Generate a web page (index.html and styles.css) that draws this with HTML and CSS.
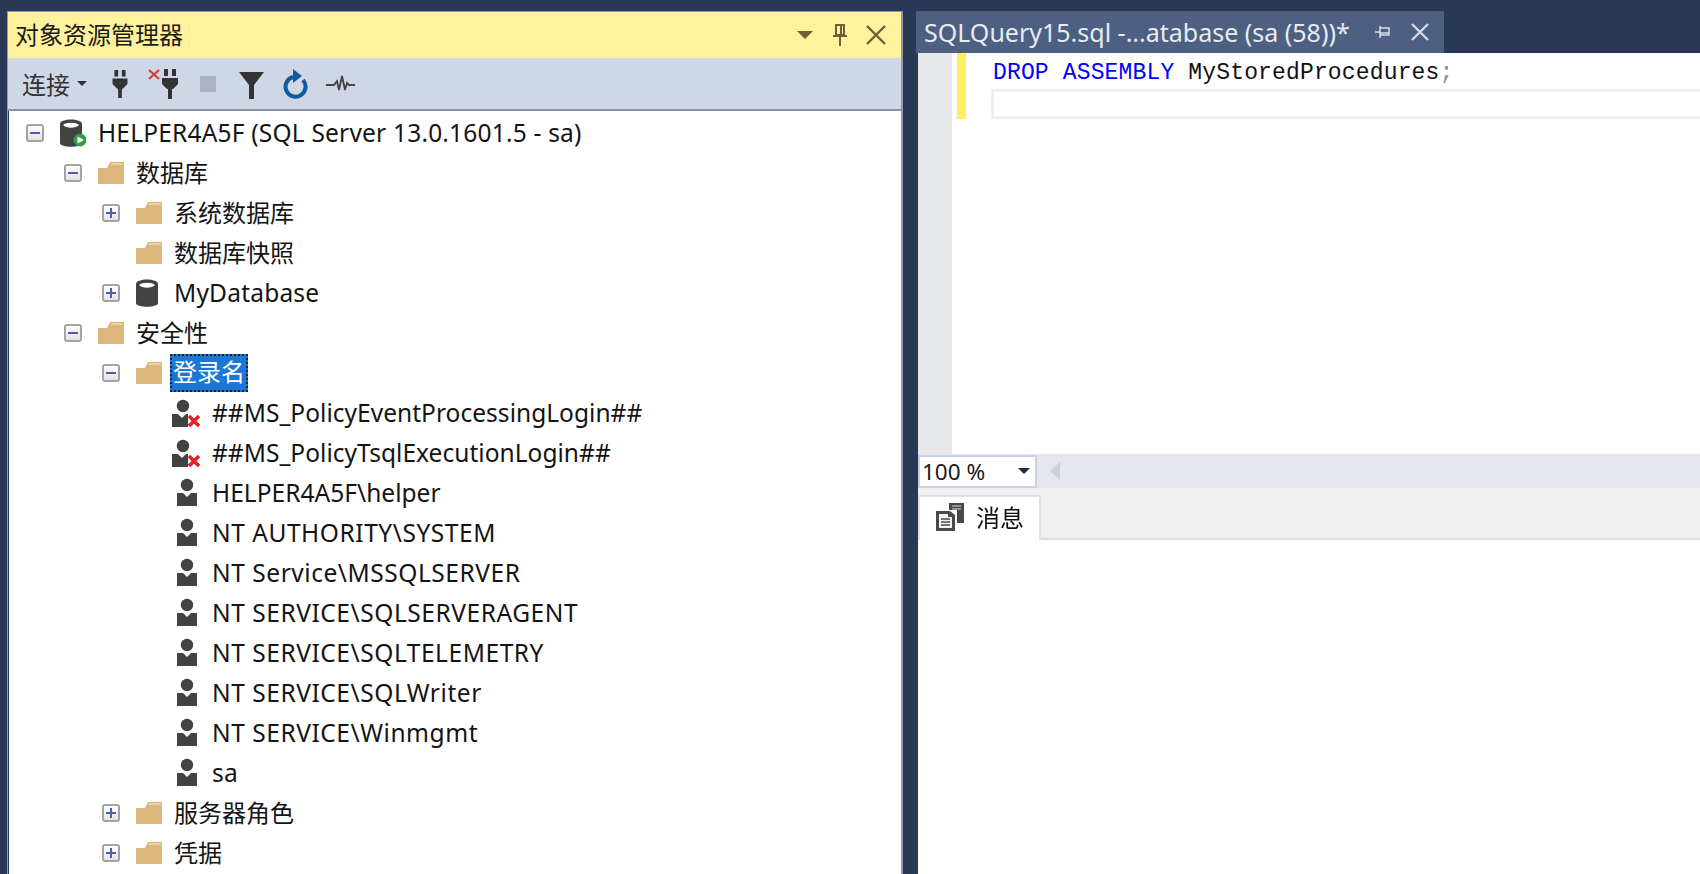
FILE: index.html
```html
<!DOCTYPE html>
<html lang="zh-CN">
<head>
<meta charset="utf-8">
<title>SSMS</title>
<link rel="stylesheet" href="styles.css">
</head>
<body>
<svg class="defs" width="0" height="0">
  <symbol id="folder" viewBox="0 0 26 22"><path d="M0 6 L9 6 L12 0 L26 0 L26 22 L0 22 Z" fill="#dcb67a"/><path d="M12.5 2 H24.5" stroke="#f0d8ae" stroke-width="1.5"/></symbol>
  <symbol id="user" viewBox="0 0 26 28"><circle cx="12" cy="7" r="6.2" fill="#424242"/><path d="M2 15 H8 L12 19 L16 15 H22 V28 H2 Z" fill="#424242"/></symbol>
  <symbol id="userx" viewBox="0 0 30 28"><circle cx="12" cy="7" r="6.2" fill="#424242"/><path d="M1 15 H7 L11 19 L15 15 H17 V28 H1 Z" fill="#424242"/><path d="M18 17 L28 27 M28 17 L18 27" stroke="#e8202a" stroke-width="3.6"/></symbol>
  <symbol id="plug" viewBox="0 0 16 30"><path d="M2 0 H6 V7 H2 Z M10 0 H14 V7 H10 Z" fill="#333"/><path d="M0 9 H16 V15 L11 20 H10 V30 H6 V20 H5 L0 15 Z" fill="#333"/></symbol>
  <symbol id="drive" viewBox="0 0 26 28"><path d="M0 5 C0 -1 22 -1 22 5 V24 C22 29 0 29 0 24 Z" fill="#424242"/><path d="M3 6 C6 3 16 3 19 6 C16 9.500 6 9.500 3 6 Z" fill="#fff"/></symbol>
</svg>
<div class="app">
  <section class="explorer">
    <header class="title">
      <span class="title-text">对象资源管理器</span>
      <svg class="t-caret" width="16" height="8" viewBox="0 0 16 8"><path d="M0 0 H16 L8 8 Z" fill="#6f5f38"/></svg>
      <svg class="t-pin" width="14" height="22" viewBox="0 0 14 22"><path d="M3 1 H11 V11 H3 Z M8 1 V11 M0 12 H14 M7 12 V22" fill="none" stroke="#6f5f38" stroke-width="2"/></svg>
      <svg class="t-close" width="20" height="20" viewBox="0 0 20 20"><path d="M1 1 L19 19 M19 1 L1 19" stroke="#6f5f38" stroke-width="2.400"/></svg>
    </header>
    <div class="toolbar">
      <span class="connect">连接</span>
      <svg class="caret" width="10" height="5" viewBox="0 0 10 5"><path d="M0 0 H10 L5 5 Z" fill="#333"/></svg>
      <svg class="tb plug1" width="16" height="28"><use href="#plug"/></svg>
      <svg class="tb plug2" width="30" height="30" viewBox="0 0 30 30"><path d="M1 1 L11 10 M11 1 L1 10" stroke="#d04030" stroke-width="2.200"/><use href="#plug" x="14" width="16" height="30"/></svg>
      <span class="tb stop"></span>
      <svg class="tb funnel" width="25" height="27" viewBox="0 0 25 27"><path d="M0 0 H25 L15 13 V27 H10 V13 Z" fill="#333"/></svg>
      <svg class="tb refresh" width="26" height="30" viewBox="0 0 26 30"><path d="M21 11 A10 10 0 1 1 11 8" fill="none" stroke="#0e5c9e" stroke-width="4"/><path d="M11 0 L20 7 L11 14 Z" fill="#0e5c9e"/></svg>
      <svg class="tb pulse" width="29" height="18" viewBox="0 0 29 18"><path d="M0 10 H8 L11 6 L13 15 L16 1 L19 15 L21 8 L23 10 H29" fill="none" stroke="#444" stroke-width="1.800"/></svg>
    </div>
    <div class="tree">
      <div class="row l0"><span class="exp minus"></span><svg class="ico" viewBox="0 0 26 28"><use href="#drive"/><circle cx="20" cy="21" r="6.500" fill="#2f9e44"/><path d="M17.500 17.500 L24 21 L17.500 24.500 Z" fill="#fff"/></svg><span class="label">HELPER4A5F (SQL Server 13.0.1601.5 - sa)</span></div>
      <div class="row l1"><span class="exp minus"></span><svg class="ico"><use href="#folder"/></svg><span class="label cn">数据库</span></div>
      <div class="row l2"><span class="exp plus"></span><svg class="ico"><use href="#folder"/></svg><span class="label cn">系统数据库</span></div>
      <div class="row l2"><span class="exp none"></span><svg class="ico"><use href="#folder"/></svg><span class="label cn">数据库快照</span></div>
      <div class="row l2"><span class="exp plus"></span><svg class="ico" viewBox="0 0 26 28"><use href="#drive"/></svg><span class="label">MyDatabase</span></div>
      <div class="row l1"><span class="exp minus"></span><svg class="ico"><use href="#folder"/></svg><span class="label cn">安全性</span></div>
      <div class="row l2"><span class="exp minus"></span><svg class="ico"><use href="#folder"/></svg><span class="label cn selected">登录名</span></div>
      <div class="row l3"><span class="exp none"></span><svg class="ico wide"><use href="#userx"/></svg><span class="label tight">##MS_PolicyEventProcessingLogin##</span></div>
      <div class="row l3"><span class="exp none"></span><svg class="ico wide"><use href="#userx"/></svg><span class="label tight">##MS_PolicyTsqlExecutionLogin##</span></div>
      <div class="row l3"><span class="exp none"></span><svg class="ico person"><use href="#user"/></svg><span class="label tight">HELPER4A5F\helper</span></div>
      <div class="row l3"><span class="exp none"></span><svg class="ico person"><use href="#user"/></svg><span class="label caps">NT AUTHORITY\SYSTEM</span></div>
      <div class="row l3"><span class="exp none"></span><svg class="ico person"><use href="#user"/></svg><span class="label caps">NT Service\MSSQLSERVER</span></div>
      <div class="row l3"><span class="exp none"></span><svg class="ico person"><use href="#user"/></svg><span class="label caps">NT SERVICE\SQLSERVERAGENT</span></div>
      <div class="row l3"><span class="exp none"></span><svg class="ico person"><use href="#user"/></svg><span class="label caps">NT SERVICE\SQLTELEMETRY</span></div>
      <div class="row l3"><span class="exp none"></span><svg class="ico person"><use href="#user"/></svg><span class="label caps">NT SERVICE\SQLWriter</span></div>
      <div class="row l3"><span class="exp none"></span><svg class="ico person"><use href="#user"/></svg><span class="label caps">NT SERVICE\Winmgmt</span></div>
      <div class="row l3"><span class="exp none"></span><svg class="ico person"><use href="#user"/></svg><span class="label">sa</span></div>
      <div class="row l2"><span class="exp plus"></span><svg class="ico"><use href="#folder"/></svg><span class="label cn">服务器角色</span></div>
      <div class="row l2"><span class="exp plus"></span><svg class="ico"><use href="#folder"/></svg><span class="label cn">凭据</span></div>
    </div>
  </section>
  <section class="doc">
    <div class="tabstrip">
      <div class="tab">
        <span class="tab-text">SQLQuery15.sql -...atabase (sa (58))*</span>
        <svg class="tab-pin" width="16" height="14" viewBox="0 0 16 14"><path d="M1 7 H6 M6 1 V13 M6 3 H15 V10 H6 M6 8 H15" fill="none" stroke="#d8dde8" stroke-width="1.500"/></svg>
        <svg class="tab-close" width="18" height="18" viewBox="0 0 18 18"><path d="M1 1 L17 17 M17 1 L1 17" stroke="#d8dde8" stroke-width="2.200"/></svg>
      </div>
    </div>
    <div class="editor">
      <div class="gutter"></div>
      <div class="change"></div>
      <div class="code">
        <div class="line"><span class="kw">DROP ASSEMBLY</span> MyStoredProcedures<span class="semi">;</span></div>
        <div class="current"></div>
      </div>
    </div>
    <div class="statusbar">
      <div class="zoombox"><span class="zoomval">100 %</span><svg width="12" height="6" viewBox="0 0 12 6"><path d="M0 0 H12 L6 6 Z" fill="#222b3a"/></svg></div>
      <svg class="scroll-left" width="10" height="18" viewBox="0 0 10 18"><path d="M10 0 V18 L0 9 Z" fill="#cdd0d6"/></svg>
    </div>
    <div class="results-tabs">
      <div class="rtab">
        <svg class="rtab-ico" width="30" height="30" viewBox="0 0 30 30"><path d="M14 1 H29 V21 H22 V8 H14 Z" fill="#4a4a4a"/><path d="M17 4 H26 M17 7 H26" stroke="#ddd" stroke-width="1.200"/><path d="M1 9 H15 L20 13 V29 H1 Z" fill="#4a4a4a"/><path d="M4 12 H13 V15 H17 V26 H4 Z" fill="#f4f4f4"/><path d="M6 17 H15 M6 20 H15 M6 23 H15" stroke="#4a4a4a" stroke-width="1.500"/></svg>
        <span class="rtab-text">消息</span>
      </div>
    </div>
    <div class="results"></div>
  </section>
</div>
</body>
</html>
```
FILE: styles.css
```css
* { box-sizing: border-box; }
html, body { margin: 0; height: 100%; overflow: hidden; }
body { background: #293955; font-family: "Noto Sans", "Noto Sans CJK SC", sans-serif; color: #1a1a1a; }
.defs { position: absolute; }
.app { display: flex; height: 874px; padding-top: 11px; padding-left: 7px; filter: blur(0.35px); }
.explorer { width: 896px; height: 863px; display: flex; flex-direction: column; flex: none; border-left: 1px solid #8e9ab2; border-top: 1px solid #8e9ab2; border-right: 2px solid #8e97a8; }
.title { height: 46px; background: #fff29d; display: flex; align-items: center; padding-left: 7px; flex: none; }
.title-text { font-size: 24px; color: #1c1c1c; flex: 1; margin-top: -4px; }
.t-caret { margin-right: 20px; }
.t-pin { margin-right: 19px; }
.t-close { margin-right: 15px; }
.toolbar { height: 53px; background: #cfd6e5; border-bottom: 2px solid #8c93a0; display: flex; align-items: center; padding-left: 14px; flex: none; }
.connect { font-size: 24px; color: #333; }
.caret { margin-left: 7px; }
.tb { flex: none; }
.plug1 { margin-left: 25px; }
.plug2 { margin-left: 20px; }
.stop { margin-left: 22px; width: 16px; height: 16px; background: #aeb3c0; }
.funnel { margin-left: 23px; margin-top: 4px; }
.refresh { margin-left: 18px; margin-top: 1px; }
.pulse { margin-left: 18px; }
.tree { flex: 1; background: #fff; margin-left: 1px; overflow: hidden; padding-top: 2px; }
.row { height: 40px; display: flex; align-items: center; }
.l0 { padding-left: 17px; }
.l1 { padding-left: 55px; }
.l2 { padding-left: 93px; }
.l3 { padding-left: 131px; }
.exp { width: 18px; height: 18px; margin-right: 16px; flex: none; position: relative; border: 2px solid #a3a3a3; border-radius: 3px; background: linear-gradient(#fff, #e4e4e8); }
.exp.none { border: 0; background: none; }
.exp.minus::before, .exp.plus::before { content: ""; position: absolute; left: 2px; right: 2px; top: 6px; height: 2px; background: #4a5da6; }
.exp.plus::after { content: ""; position: absolute; top: 2px; bottom: 2px; left: 6px; width: 2px; background: #4a5da6; }
.ico { width: 26px; height: 28px; margin-right: 12px; flex: none; }
.ico.wide { width: 30px; margin-left: -3px; margin-right: 11px; }
.ico.person { margin-left: 1px; margin-right: 11px; margin-top: -2px; }
.label { font-size: 24.5px; letter-spacing: 0.2px; line-height: 36px; white-space: nowrap; color: #141414; }
.tight { letter-spacing: 0.03px; }
.caps { letter-spacing: 0.55px; }
.cn { font-size: 24px; letter-spacing: 0; }
.selected { margin-left: -4px; padding: 0 3px; height: 38px; background: #1b77d7; color: #fff; outline: 2px dotted #222; outline-offset: -2px; }
.doc { flex: 1; margin-left: 13px; display: flex; flex-direction: column; min-width: 0; }
.tabstrip { height: 42px; flex: none; }
.tab { width: 528px; height: 42px; background: #4d6082; display: flex; align-items: center; padding-left: 8px; color: #e8ebf2; }
.tab-text { font-size: 25px; flex: 1; white-space: nowrap; }
.tab-pin { margin-right: 21px; }
.tab-close { margin-right: 15px; }
.editor { height: 401px; background: #fff; display: flex; margin-left: 2px; flex: none; }
.gutter { width: 34px; background: #e6e7e8; flex: none; }
.change { width: 9px; height: 66px; margin-left: 5px; background: #ffee62; flex: none; }
.code { flex: 1; margin-left: 25px; }
.line { height: 36px; padding-left: 2px; padding-top: 6px; font-family: "Liberation Mono", monospace; font-size: 23px; letter-spacing: 0.15px; line-height: 28px; color: #111; white-space: pre; }
.kw { color: #0000ff; }
.semi { color: #888; }
.current { height: 30px; border: 3px solid #eeeef2; border-right: 0; }
.statusbar { height: 34px; margin-left: 2px; background: #e6e7ed; display: flex; align-items: center; flex: none; }
.zoombox { width: 119px; height: 33px; background: #fff; border: 2px solid #c8d2e6; display: flex; align-items: center; justify-content: space-between; padding: 0 5px 0 2px; }
.zoomval { font-size: 22.5px; color: #1a1a1a; }
.scroll-left { margin-left: 13px; }
.results-tabs { height: 52px; margin-left: 2px; background: #f0f0f0; display: flex; align-items: flex-end; border-bottom: 2px solid #dcdcdc; flex: none; }
.rtab { width: 123px; height: 45px; margin-bottom: -2px; background: #fff; border: 2px solid #e2e2e2; border-bottom: 0; display: flex; align-items: center; padding-left: 15px; gap: 11px; }
.rtab-ico { margin-top: -4px; }
.rtab-text { font-size: 24px; color: #111; margin-top: -4px; }
.results { flex: 1; background: #fff; margin-left: 2px; }
```
